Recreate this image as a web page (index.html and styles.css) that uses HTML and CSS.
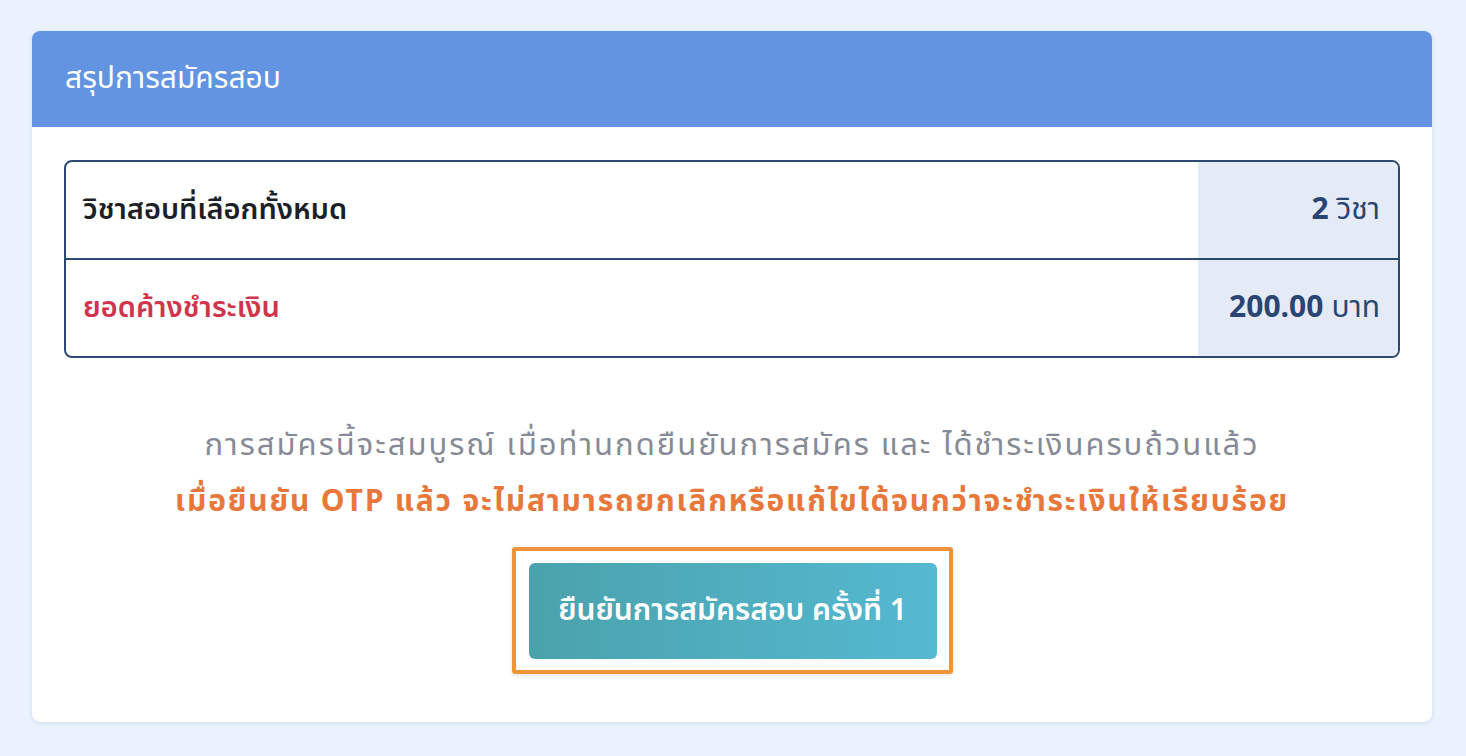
FILE: index.html
```html
<!DOCTYPE html>
<html lang="th">
<head>
<meta charset="utf-8">
<link rel="stylesheet" href="styles.css">
</head>
<body>
<div class="page">
  <section class="card">
    <header class="card-head">สรุปการสมัครสอบ</header>
    <div class="card-body">
      <div class="summary">
        <div class="row">
          <div class="label">วิชาสอบที่เลือกทั้งหมด</div>
          <div class="value"><b>2</b> วิชา</div>
        </div>
        <div class="row">
          <div class="label due">ยอดค้างชำระเงิน</div>
          <div class="value"><b>200.00</b> บาท</div>
        </div>
      </div>
      <p class="note">การสมัครนี้จะสมบูรณ์ เมื่อท่านกดยืนยันการสมัคร และ ได้ชำระเงินครบถ้วนแล้ว</p>
      <p class="warn">เมื่อยืนยัน OTP แล้ว จะไม่สามารถยกเลิกหรือแก้ไขได้จนกว่าจะชำระเงินให้เรียบร้อย</p>
      <div class="actions">
        <div class="focus-ring">
          <button class="confirm">ยืนยันการสมัครสอบ ครั้งที่ 1</button>
        </div>
      </div>
    </div>
  </section>
</div>
</body>
</html>
```
FILE: styles.css
```css
html, body {
  margin: 0;
  padding: 0;
  background: #e9f2fd;
  font-family: "Noto Sans Thai", "Kanit", "Sarabun", "Loma", "Garuda", "Noto Sans", sans-serif;
}
.page {
  padding: 31px 34px 36px 32px;
}
.card {
  background: #fff;
  border-radius: 8px;
  box-shadow: 0 1px 4px rgba(60, 80, 130, 0.14);
  overflow: hidden;
}
.card-head {
  background: #6294e2;
  color: #fff;
  font-size: 30px;
  height: 96px;
  display: flex;
  align-items: center;
  padding-left: 33px;
}
.card-body {
  padding: 33px 32px 48px 32px;
}
.summary {
  border: 2px solid #2c4a71;
  border-radius: 8px;
  overflow: hidden;
}
.row {
  display: grid;
  grid-template-columns: 1fr 200px;
  height: 96px;
}
.row + .row {
  border-top: 2px solid #2c4a71;
}
.label {
  display: flex;
  align-items: center;
  padding-left: 17px;
  font-size: 29px;
  font-weight: 600;
  color: #1d1f26;
}
.label.due {
  color: #d1344c;
}
.value {
  background: #e4ebf7;
  display: flex;
  align-items: center;
  justify-content: flex-end;
  padding-right: 18px;
  font-size: 30px;
  color: #2a4572;
}
.value b {
  font-weight: 700;
  margin-right: 8px;
}
.note {
  margin: 68px 0 0;
  text-align: center;
  font-size: 31px;
  letter-spacing: 2px;
  color: #868a96;
  line-height: 40px;
}
.warn {
  margin: 16px 0 0;
  text-align: center;
  font-size: 30px;
  letter-spacing: 1.8px;
  font-weight: 700;
  color: #e8773b;
  line-height: 40px;
}
.actions {
  display: flex;
  justify-content: center;
  margin-top: 25px;
}
.focus-ring {
  border: 4px solid #f0943a;
  border-radius: 3px;
  padding: 12px 12px 11px 13px;
  box-shadow: 0 1px 4px rgba(0,0,0,0.12);
}
.confirm {
  display: block;
  width: 408px;
  height: 96px;
  border: none;
  border-radius: 6px;
  background: linear-gradient(90deg, #4aa2ac 0%, #55b9d1 100%);
  color: #fff;
  font-family: inherit;
  font-size: 30px;
  font-weight: 600;
  cursor: pointer;
}
```
